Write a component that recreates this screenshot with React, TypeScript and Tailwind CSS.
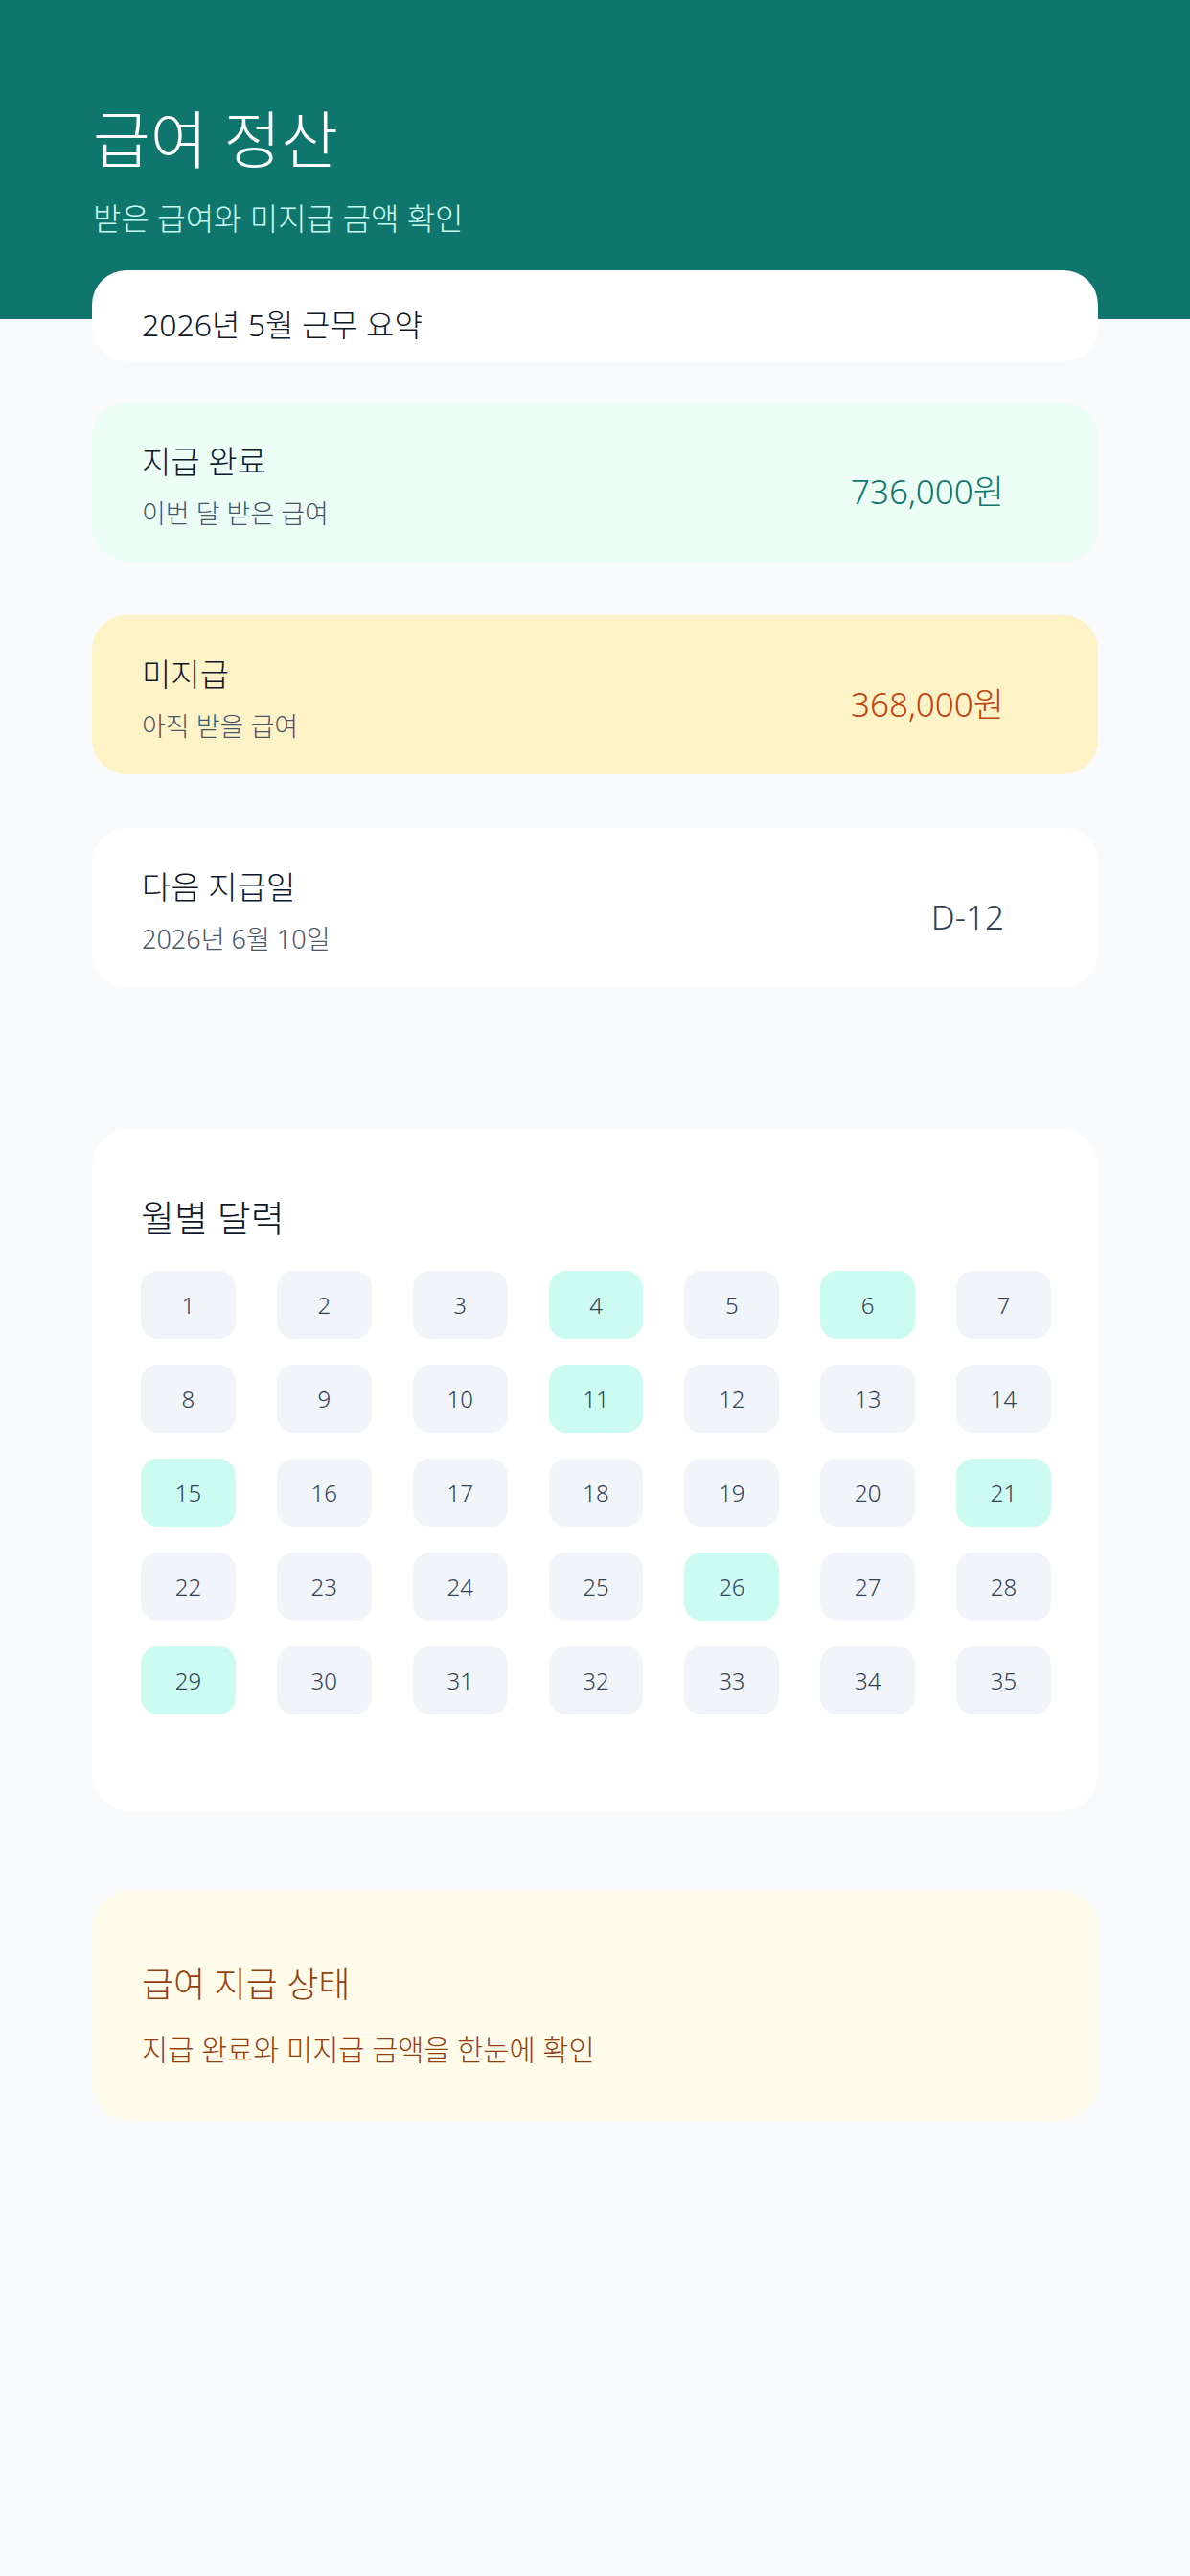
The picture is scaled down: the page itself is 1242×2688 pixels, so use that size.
import React from 'react';

const font = { fontFamily: '"Noto Sans", "Noto Sans CJK KR", sans-serif' };

const paidDays = [4, 6, 11, 15, 21, 26, 29];

type SummaryCardProps = {
    title: string;
    sub: string;
    value: string;
    bg: string;
    valueColor: string;
};

const SummaryCard: React.FC<SummaryCardProps> = ({ title, sub, value, bg, valueColor }) => (
    <div className={`flex items-start justify-between rounded-[36px] h-[166px] pl-[52px] pr-[98px] pt-[42px] ${bg}`}>
        <div className="flex flex-col">
            <span className="text-[33px] leading-[40px] text-[#0f172a]">{title}</span>
            <span className="mt-[16px] text-[27px] leading-[36px] text-[#475569]">{sub}</span>
        </div>
        <span className={`mt-[29px] text-[35px] leading-[44px] ${valueColor}`}>{value}</span>
    </div>
);

export default function App() {
    const days = Array.from({ length: 35 }, (_, i) => i + 1);

    return (
        <div className="min-h-[2688px] w-[1242px] bg-[#f8fafc] font-light" style={font}>
            <header className="bg-[#0f766e] px-[97px] pt-[106px] pb-[85px]">
                <h1 className="text-[65px] leading-[78px] font-light text-white">급여 정산</h1>
                <p className="mt-[24px] text-[32px] leading-[40px] text-[#ccfbf1]">받은 급여와 미지급 금액 확인</p>
            </header>

            <main className="px-[96px] -mt-[51px] pb-[200px]">
                <div className="rounded-[36px] bg-white pl-[52px] pt-[37px] pb-[18px]">
                    <span className="text-[32px] leading-[40px] text-[#0f172a]">2026년 5월 근무 요약</span>
                </div>

                <div className="mt-[43px] flex flex-col gap-[56px]">
                    <SummaryCard title="지급 완료" sub="이번 달 받은 급여" value="736,000원" bg="bg-[#ecfdf5]" valueColor="text-[#0f766e]" />
                    <SummaryCard title="미지급" sub="아직 받을 급여" value="368,000원" bg="bg-[#fef3c7]" valueColor="text-[#c2410c]" />
                    <SummaryCard title="다음 지급일" sub="2026년 6월 10일" value="D-12" bg="bg-white" valueColor="text-[#334155]" />
                </div>

                <section className="mt-[148px] rounded-[40px] bg-white pl-[51px] pr-[49px] pt-[70px] pb-[101px]">
                    <h2 className="text-[38px] leading-[44px] font-light text-[#0f172a]">월별 달력</h2>
                    <div className="mt-[34px] grid grid-cols-7 gap-x-[43px] gap-y-[27px]">
                        {days.map(d => (
                            <div
                                key={d}
                                className={`flex h-[71px] items-center justify-center rounded-[18px] text-[24px] text-[#334155] ${paidDays.includes(d) ? 'bg-[#ccfbf1]' : 'bg-[#f1f5f9]'}`}
                            >
                                {d}
                            </div>
                        ))}
                    </div>
                </section>

                <section className="mt-[82px] rounded-[40px] bg-[#fffbeb] h-[241px] pl-[52px] pt-[77px]">
                    <h2 className="text-[36px] leading-[44px] font-light text-[#92400e]">급여 지급 상태</h2>
                    <p className="mt-[28px] text-[29.5px] leading-[36px] text-[#92400e]">지급 완료와 미지급 금액을 한눈에 확인</p>
                </section>
            </main>
        </div>
    );
}
